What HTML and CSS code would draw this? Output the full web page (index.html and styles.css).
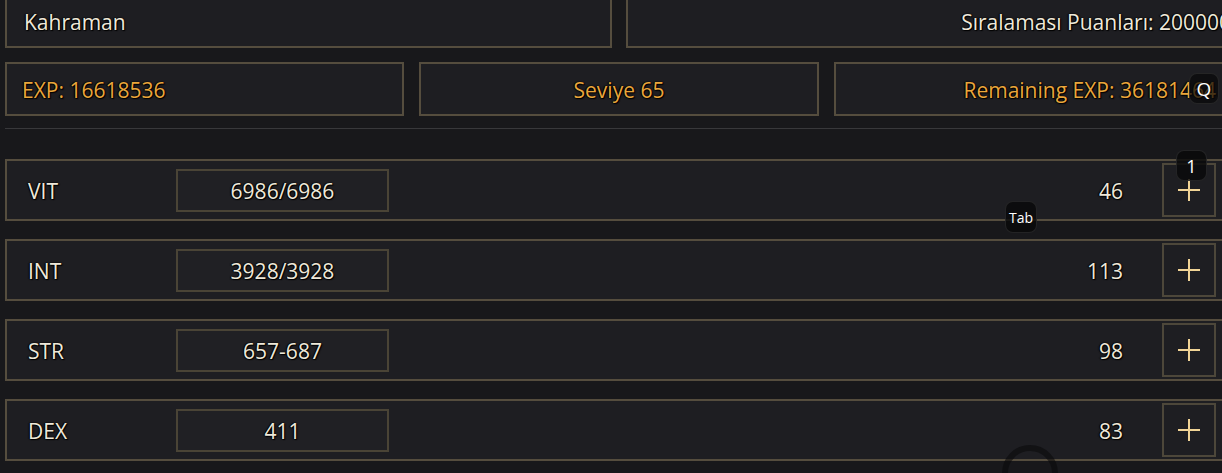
FILE: index.html
```html
<!DOCTYPE html>
<html lang="tr">
<head>
<meta charset="utf-8">
<title>Karakter</title>
<link rel="stylesheet" href="styles.css">
</head>
<body>
<div class="page">
  <div class="top-row">
    <div class="box box-left"><span class="txt">Kahraman</span></div>
    <div class="box box-right box-rank"><span class="txt">Sıralaması Puanları: 200000</span></div>
  </div>
  <div class="exp-row">
    <div class="box box-left gold"><span class="txt">EXP: 16618536</span></div>
    <div class="box box-center gold"><span class="txt">Seviye 65</span></div>
    <div class="box box-right gold"><span class="txt">Remaining EXP: 36181464</span></div>
  </div>
  <div class="separator"></div>
  <div class="stats">
    <div class="stat-row">
      <span class="stat-label txt">VIT</span>
      <div class="stat-value"><span class="txt">6986/6986</span></div>
      <span class="stat-points txt">46</span>
      <button class="plus" aria-label="VIT +"></button>
    </div>
    <div class="stat-row">
      <span class="stat-label txt">INT</span>
      <div class="stat-value"><span class="txt">3928/3928</span></div>
      <span class="stat-points txt">113</span>
      <button class="plus" aria-label="INT +"></button>
    </div>
    <div class="stat-row">
      <span class="stat-label txt">STR</span>
      <div class="stat-value"><span class="txt">657-687</span></div>
      <span class="stat-points txt">98</span>
      <button class="plus" aria-label="STR +"></button>
    </div>
    <div class="stat-row">
      <span class="stat-label txt">DEX</span>
      <div class="stat-value"><span class="txt">411</span></div>
      <span class="stat-points txt">83</span>
      <button class="plus" aria-label="DEX +"></button>
    </div>
  </div>
</div>
<div class="key key-q">Q</div>
<div class="key key-1">1</div>
<div class="key key-tab">Tab</div>
<div class="ring"></div>
</body>
</html>
```

FILE: styles.css
```css
html, body {
  margin: 0;
  padding: 0;
}
body {
  background: #18181b;
  width: 1222px;
  height: 473px;
  overflow: hidden;
  position: relative;
  font-family: "Open Sans", "Noto Sans", "DejaVu Sans", sans-serif;
  font-size: 21px;
  color: #efe9da;
}
.page {
  width: 1228px;
  margin-left: 5px;
  margin-top: -6px;
}
.txt {
  text-shadow: 0 0 2px #000, 1px 1px 1px #000, -1px 0 1px #000;
  white-space: nowrap;
}
.box {
  box-sizing: border-box;
  height: 54px;
  border: 2px solid #554d3e;
  background: #1e1e22;
  display: flex;
  align-items: center;
  padding: 2px 15px 0 15px;
  overflow: hidden;
}
.box-left { justify-content: flex-start; }
.box-center { justify-content: center; }
.box-right { justify-content: flex-end; }
.gold { color: #eaa63b; }
.top-row {
  display: grid;
  grid-template-columns: 1fr 1fr;
  gap: 14px;
}
.top-row .box-left { padding-left: 17px; }
.top-row .box-rank { padding-right: 0; }
.exp-row {
  display: grid;
  grid-template-columns: 1fr 1fr 1fr;
  gap: 15px;
  margin-top: 14px;
}
.separator {
  height: 1px;
  background: #38383b;
  margin-top: 12px;
}
.stats {
  margin-top: 30px;
  display: flex;
  flex-direction: column;
  gap: 18px;
}
.stat-row {
  box-sizing: border-box;
  height: 62px;
  border: 2px solid #554d3e;
  background: #1e1e22;
  display: flex;
  align-items: center;
  padding: 0 15px 0 21px;
}
.stat-label {
  width: 148px;
  padding-top: 2px;
}
.stat-value {
  box-sizing: border-box;
  width: 213px;
  height: 43px;
  border: 2px solid #4a4436;
  background: #202024;
  display: flex;
  align-items: center;
  justify-content: center;
  padding-top: 2px;
}
.stat-points {
  margin-left: auto;
  margin-right: 39px;
  padding-top: 2px;
}
.plus {
  box-sizing: border-box;
  width: 54px;
  height: 54px;
  border: 2px solid #4d473a;
  background: #1e1e22;
  position: relative;
  padding: 0;
}
.plus::before,
.plus::after {
  content: "";
  position: absolute;
  background: #f1d496;
  left: 50%;
  top: 50%;
  transform: translate(-50%, -50%);
}
.plus::before {
  width: 22px;
  height: 2px;
}
.plus::after {
  width: 2px;
  height: 22px;
}
.key {
  position: absolute;
  box-sizing: border-box;
  background: rgba(8, 8, 10, 0.82);
  border: 1px solid rgba(60, 60, 60, 0.5);
  border-radius: 8px;
  color: #ffffff;
  display: flex;
  align-items: center;
  justify-content: center;
  font-family: "Open Sans", "DejaVu Sans", sans-serif;
}
.key-q {
  left: 1189px;
  top: 73px;
  width: 30px;
  height: 31px;
  font-size: 19px;
  background: rgba(8, 8, 10, 0.72);
}
.key-1 {
  left: 1176px;
  top: 150px;
  width: 31px;
  height: 31px;
  font-size: 18px;
}
.key-tab {
  left: 1005px;
  top: 201px;
  width: 32px;
  height: 32px;
  font-size: 14px;
}
.ring {
  position: absolute;
  left: 1002px;
  top: 445px;
  width: 56px;
  height: 28px;
  overflow: hidden;
}
.ring::before {
  content: "";
  position: absolute;
  left: 0;
  top: 0;
  width: 56px;
  height: 56px;
  box-sizing: border-box;
  border: 6px solid rgba(10, 10, 12, 0.6);
  border-radius: 50%;
}
```
